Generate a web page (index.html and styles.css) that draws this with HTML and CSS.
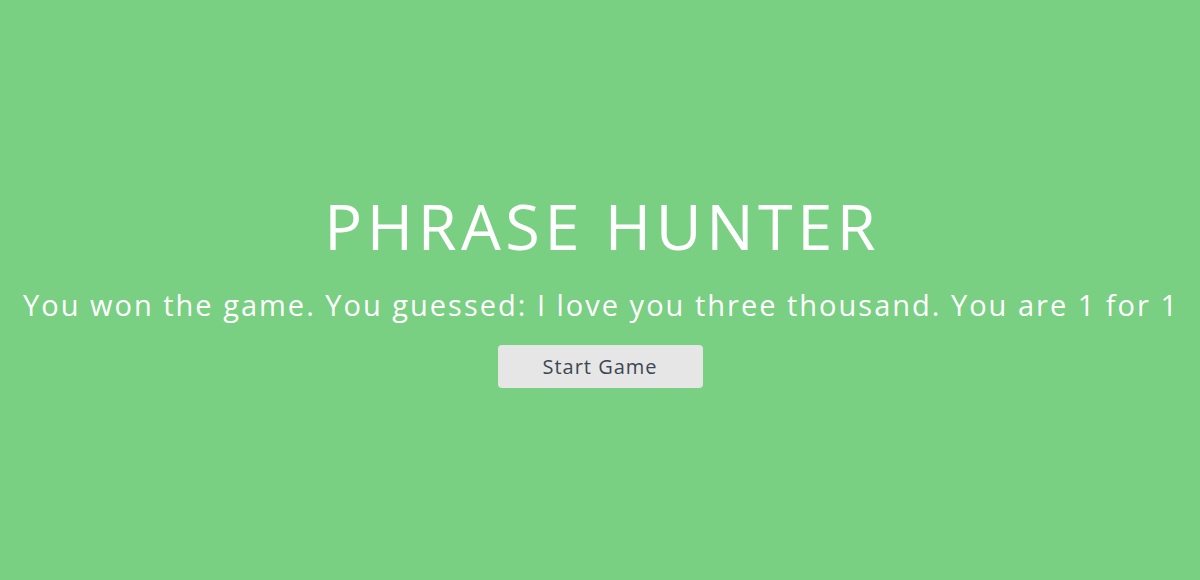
FILE: index.html
```html
<!DOCTYPE html>
<html>
<head>
<meta charset="utf-8">
<link rel="stylesheet" href="styles.css">
</head>
<body>
<div class="overlay">
  <h1 class="title">PHRASE HUNTER</h1>
  <h2 class="message">You won the game. You guessed: I love you three thousand. You are 1 for 1</h2>
  <button class="btn-reset">Start Game</button>
</div>
</body>
</html>
```
FILE: styles.css
```css
html, body {
  margin: 0;
  padding: 0;
  height: 100%;
}
body {
  font-family: "Open Sans", "Liberation Sans", sans-serif;
  background: #79cf82;
}
.overlay {
  height: 580px;
  background: #79cf82;
  display: flex;
  flex-direction: column;
  align-items: center;
  justify-content: center;
  color: #fff;
  padding-bottom: 5px;
  box-sizing: border-box;
}
.title {
  margin: 0;
  padding-left: 4.5px;
  font-size: 63px;
  font-weight: 400;
  line-height: 76px;
  letter-spacing: 4.5px;
}
.message {
  margin: 0;
  margin-top: 21px;
  padding-left: 2px;
  font-size: 29px;
  font-weight: 400;
  line-height: 40px;
  letter-spacing: 2px;
  white-space: nowrap;
}
.btn-reset {
  margin-top: 20px;
  width: 205px;
  height: 43px;
  border: none;
  border-radius: 4px;
  background: #e6e6e6;
  color: #3c4752;
  font-family: "Open Sans", "Liberation Sans", sans-serif;
  font-size: 20px;
  letter-spacing: 1px;
}
```
